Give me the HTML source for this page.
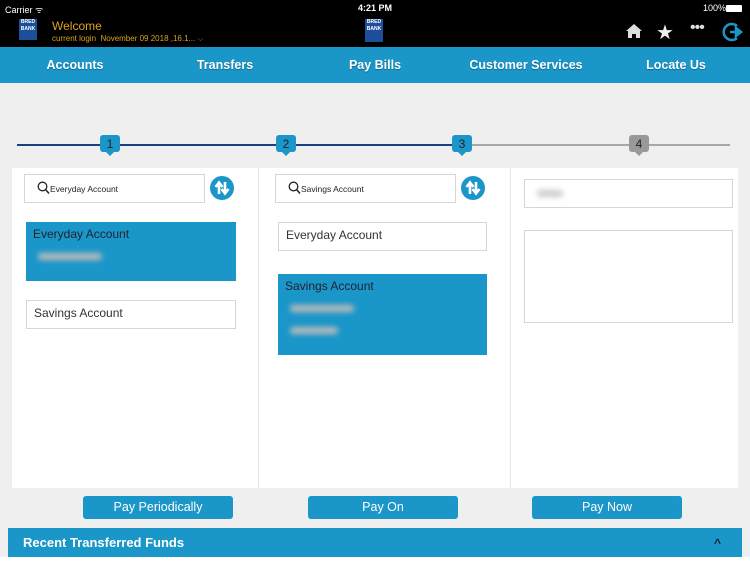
<!DOCTYPE html>
<html><head><style>
*{margin:0;padding:0;box-sizing:border-box}
body{width:750px;height:562px;background:#efefef;font-family:"Liberation Sans",sans-serif;position:relative;overflow:hidden}
.a{position:absolute}
.blue{background:#1a96c8}
.nav span{position:absolute;top:11px;color:#fff;font-size:12.5px;font-weight:bold;transform:translateX(-50%);text-shadow:0 1px 1px rgba(0,0,0,.3)}
.mk{position:absolute;top:135px;width:20px;height:17px;border-radius:3px;color:#222;font-size:12px;text-align:center;line-height:19px}
.mk:after{content:"";position:absolute;left:6px;bottom:-4px;border:4px solid transparent;border-top-color:inherit;border-bottom:0}
.box{position:absolute;background:#fff;border:1.5px solid #d6d6d6}
.txt{font-size:12px;color:#333;position:absolute;left:7px;top:5px}
.blur{position:absolute;background:#bbb;filter:blur(3px);height:7px;border-radius:3px}
.btn{position:absolute;top:496px;height:23px;border-radius:3px;color:#fff;font-size:12.5px;text-align:center;line-height:23px;background:#1a96c8}
.sort{position:absolute;top:176px;width:24px;height:24px;border-radius:50%;background:#1a96c8}
</style></head><body>
<div class="a" style="left:0;top:0;width:750px;height:47px;background:#000"></div>
<div class="a" style="left:5px;top:3px;color:#fff;font-size:9px">Carrier ᯤ</div>
<div class="a" style="left:358px;top:3px;color:#fff;font-size:9px;font-weight:bold">4:21 PM</div>
<div class="a" style="left:703px;top:3px;color:#fff;font-size:9px">100%</div>
<div class="a" style="left:726px;top:5px;width:16px;height:7px;background:#fff;border-radius:1px"></div>
<div class="a" style="left:19px;top:19px;width:18px;height:21px;background:#1c4e9a;color:#fff;font-size:5px;font-weight:bold;text-align:center;line-height:7px">BRED<br>BANK</div>
<div class="a" style="left:365px;top:19px;width:18px;height:23px;background:#1c4e9a;color:#fff;font-size:5px;font-weight:bold;text-align:center;line-height:7px">BRED<br>BANK</div>
<div class="a" style="left:52px;top:19px;color:#d9a21b;font-size:12px">Welcome</div>
<div class="a" style="left:52px;top:34px;color:#d9a21b;font-size:8px">current login&nbsp; November 09 2018 ,16.1... <span style="color:#777">⌵</span></div>
<svg class="a" style="left:625px;top:23px" width="18" height="16" viewBox="0 0 18 16"><path d="M9 1L1 8h2v7h4v-4h4v4h4V8h2z" fill="#ddd"/></svg>
<div class="a" style="left:656px;top:20px;color:#eee;font-size:20px">★</div>
<div class="a" style="left:690px;top:19px;color:#ddd;font-size:16px;letter-spacing:-1px">•••</div>
<svg class="a" style="left:722px;top:21px" width="22" height="22" viewBox="0 0 22 22"><path d="M15 5 A8 8 0 1 0 15 17" fill="none" stroke="#1a96c8" stroke-width="2.5"/><path d="M8 11h9M14 7l5 4-5 4z" stroke="#1a96c8" stroke-width="2.5" fill="#1a96c8"/></svg>
<div class="a blue nav" style="left:0;top:47px;width:750px;height:36px">
<span style="left:75px">Accounts</span><span style="left:225px">Transfers</span><span style="left:375px">Pay Bills</span><span style="left:526px">Customer Services</span><span style="left:676px">Locate Us</span></div>
<div class="a" style="left:17px;top:144px;width:445px;height:2px;background:#1b3f80"></div>
<div class="a" style="left:462px;top:144px;width:268px;height:2px;background:#a8a8a8"></div>
<div class="mk" style="left:100px;background:#1a96c8;border-color:#1a96c8">1</div>
<div class="mk" style="left:276px;background:#1a96c8;border-color:#1a96c8">2</div>
<div class="mk" style="left:452px;background:#1a96c8;border-color:#1a96c8">3</div>
<div class="mk" style="left:629px;background:#999;border-color:#999">4</div>
<div class="a" style="left:12px;top:168px;width:726px;height:320px;background:#fff"></div>
<div class="a" style="left:258px;top:168px;width:1px;height:320px;background:#e6e6e6"></div>
<div class="a" style="left:510px;top:168px;width:1px;height:320px;background:#e6e6e6"></div>
<div class="box" style="left:24px;top:174px;width:181px;height:29px"><svg class="a" style="left:12px;top:6px" width="13" height="14" viewBox="0 0 13 14"><circle cx="5.5" cy="5.5" r="4.3" fill="none" stroke="#222" stroke-width="1.3"/><path d="M8.5 8.5l3.5 4" stroke="#222" stroke-width="1.5"/></svg><span class="a" style="left:25px;top:9px;font-size:8.5px;color:#222">Everyday Account</span></div>
<div class="sort" style="left:210px"><svg width="24" height="24" viewBox="0 0 24 24"><path d="M9 18V8M5.5 11L9 6.5 12.5 11M15 6v10M11.5 13L15 17.5 18.5 13" stroke="#fff" stroke-width="2.6" fill="none"/></svg></div>
<div class="a blue" style="left:26px;top:222px;width:210px;height:59px"><span class="txt" style="color:#223">Everyday Account</span><div class="blur" style="left:12px;top:31px;width:64px"></div></div>
<div class="box" style="left:26px;top:300px;width:210px;height:29px"><span class="txt">Savings Account</span></div>
<div class="box" style="left:275px;top:174px;width:181px;height:29px"><svg class="a" style="left:12px;top:6px" width="13" height="14" viewBox="0 0 13 14"><circle cx="5.5" cy="5.5" r="4.3" fill="none" stroke="#222" stroke-width="1.3"/><path d="M8.5 8.5l3.5 4" stroke="#222" stroke-width="1.5"/></svg><span class="a" style="left:25px;top:9px;font-size:8.5px;color:#222">Savings Account</span></div>
<div class="sort" style="left:461px"><svg width="24" height="24" viewBox="0 0 24 24"><path d="M9 18V8M5.5 11L9 6.5 12.5 11M15 6v10M11.5 13L15 17.5 18.5 13" stroke="#fff" stroke-width="2.6" fill="none"/></svg></div>
<div class="box" style="left:278px;top:222px;width:209px;height:29px"><span class="txt">Everyday Account</span></div>
<div class="a blue" style="left:278px;top:274px;width:209px;height:81px"><span class="txt" style="color:#223">Savings Account</span><div class="blur" style="left:12px;top:31px;width:64px"></div><div class="blur" style="left:12px;top:53px;width:48px"></div></div>
<div class="box" style="left:524px;top:179px;width:209px;height:29px"><div class="blur" style="left:12px;top:10px;width:26px;background:#ccc"></div></div>
<div class="box" style="left:524px;top:230px;width:209px;height:93px"></div>
<div class="btn" style="left:83px;width:150px">Pay Periodically</div>
<div class="btn" style="left:308px;width:150px">Pay On</div>
<div class="btn" style="left:532px;width:150px">Pay Now</div>
<div class="a blue" style="left:8px;top:528px;width:734px;height:29px"><span class="a" style="left:15px;top:7px;color:#fff;font-size:13px;font-weight:bold">Recent Transferred Funds</span><span class="a" style="left:706px;top:8px;color:#123;font-size:12px;font-weight:bold">^</span></div>
<div class="a" style="left:0;top:557px;width:750px;height:5px;background:#fff"></div>
</body></html>
